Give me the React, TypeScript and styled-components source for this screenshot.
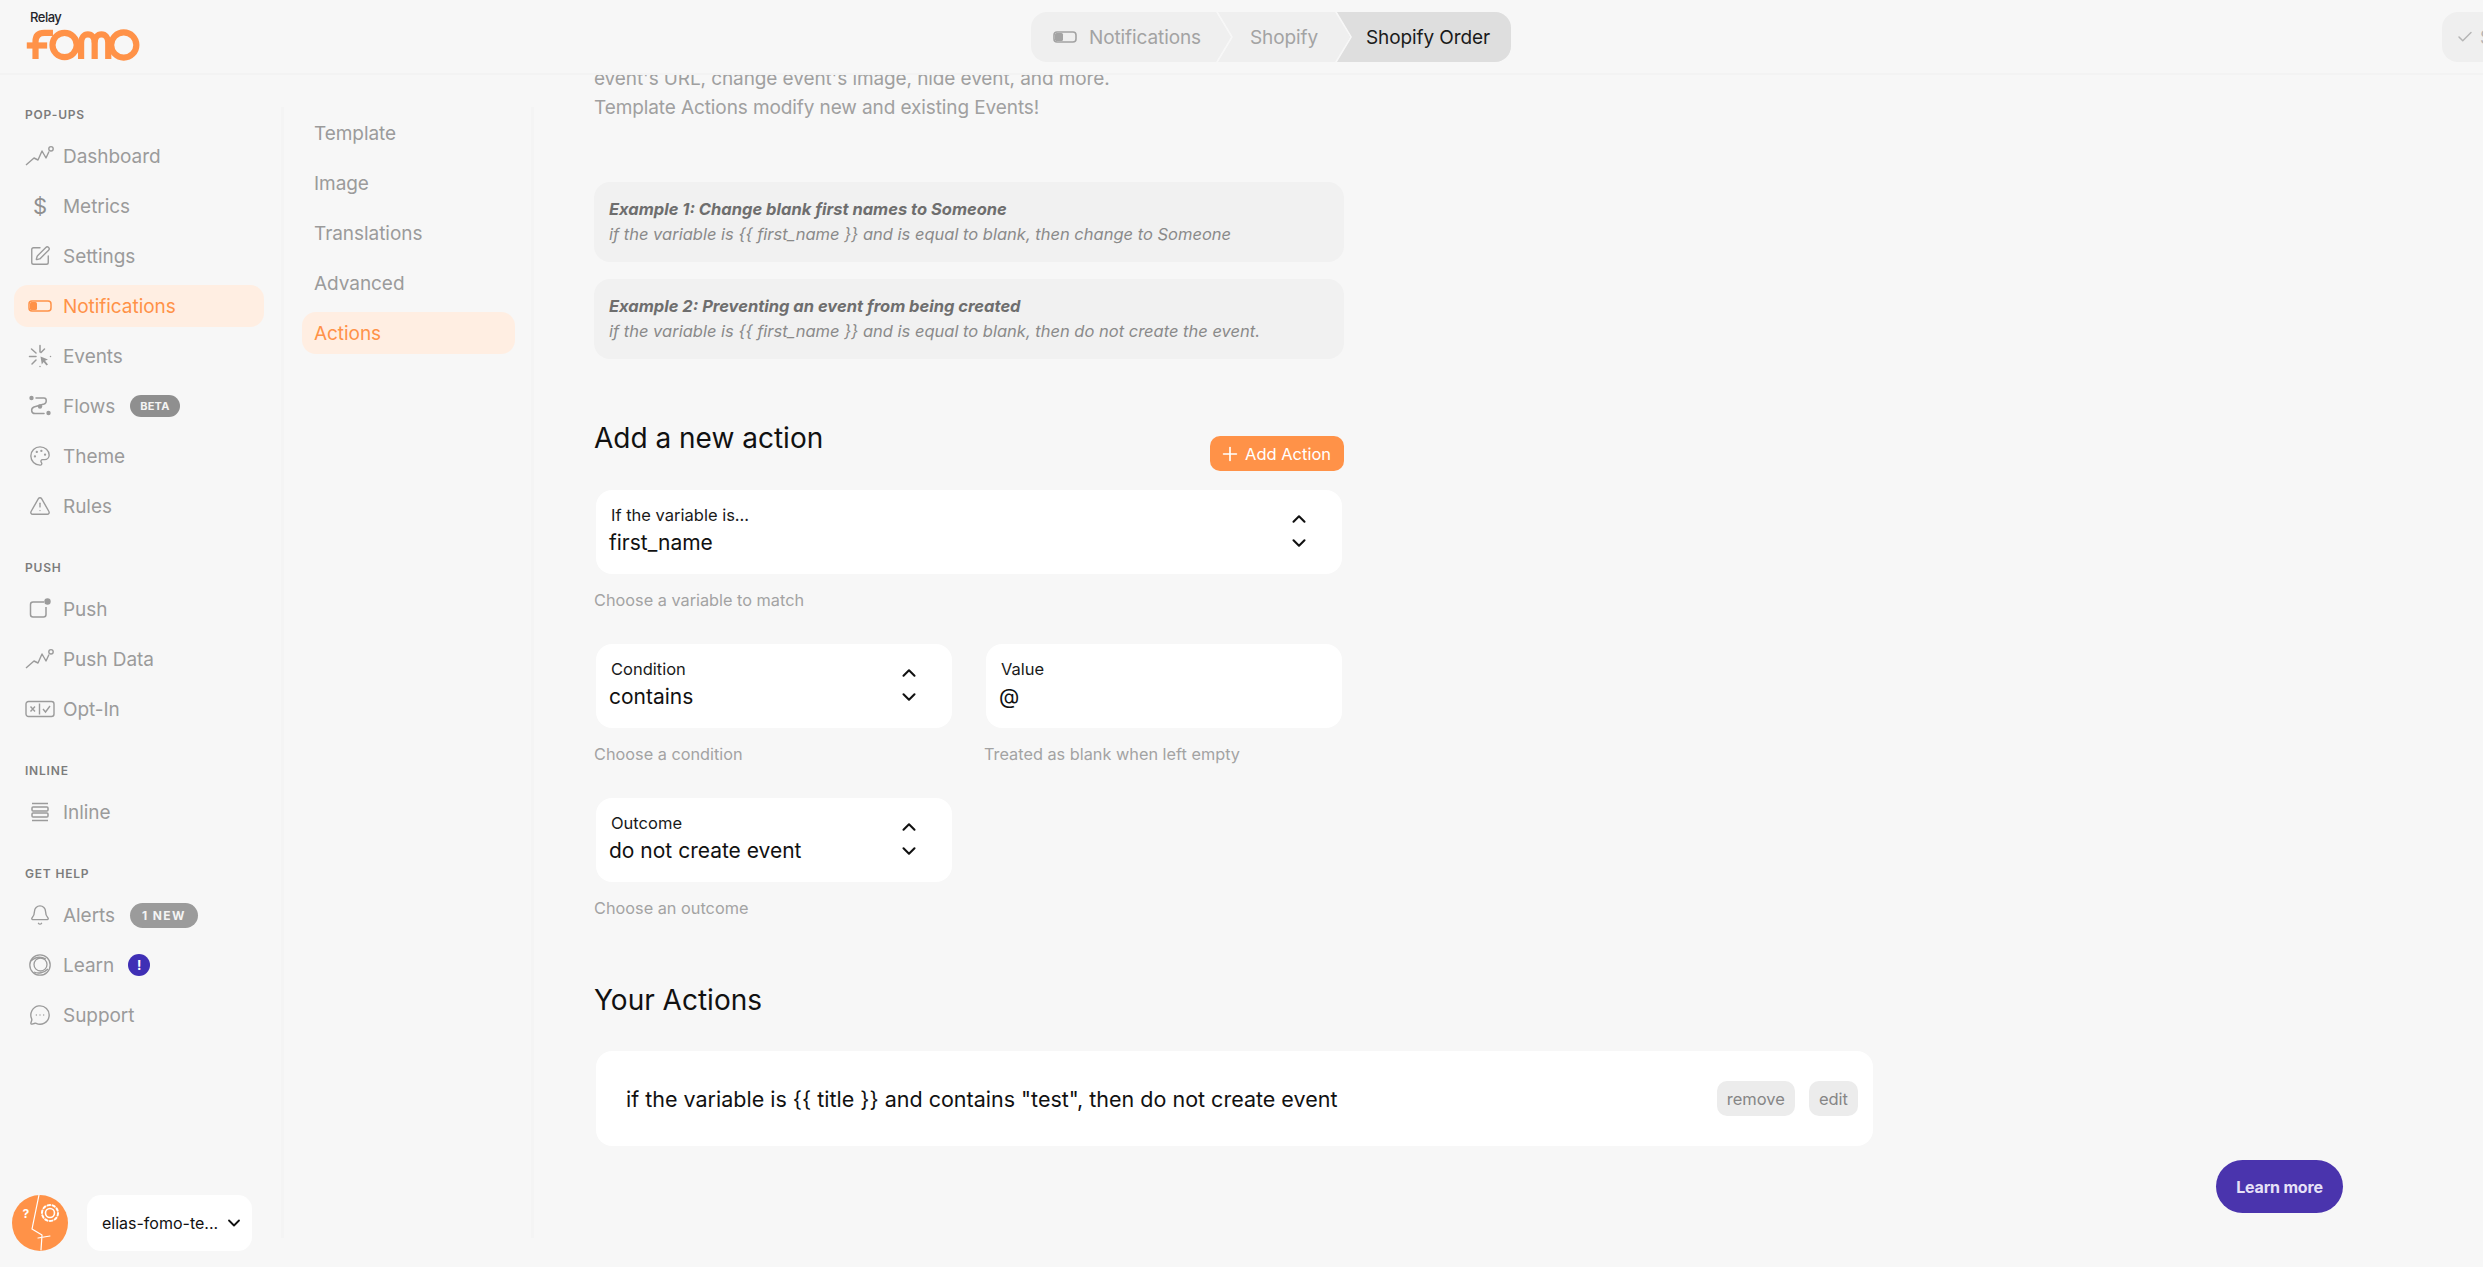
import React from "react";
import styled, { createGlobalStyle } from "styled-components";
import {
  Bell,
  Check,
  ChevronDown,
  ChevronUp,
  MessageCircleMore,
  Palette,
  Plus,
  SquarePen,
  TriangleAlert,
} from "lucide-react";

const FONT = `"Inter", "Noto Sans", sans-serif`;
const ORANGE = "#ff9248";

const GlobalStyle = createGlobalStyle`
  html, body {
    margin: 0;
    height: 100%;
    background: #f7f7f7;
    font-family: ${FONT};
    overflow: hidden;
  }
  * {
    box-sizing: border-box;
  }
`;

const TrendIcon = () => (
  <svg width="30" height="22" viewBox="0 0 30 22" fill="none" stroke="currentColor" strokeWidth="1.4">
    <path d="M1 20 L9 13 L13 15 L17 6 L21 13 L24 6.5" strokeLinejoin="round" />
    <circle cx="26" cy="3.8" r="2.2" />
  </svg>
);

const ToggleIcon = () => (
  <svg width="24" height="14" viewBox="0 0 24 14" fill="none" stroke="currentColor" strokeWidth="1.5">
    <rect x="1" y="2" width="22" height="10" rx="3" />
    <rect x="2" y="3" width="7" height="8" rx="1.5" fill="currentColor" stroke="none" />
  </svg>
);

const EventsIcon = () => (
  <svg width="24" height="24" viewBox="0 0 24 24" fill="none" stroke="currentColor" strokeWidth="1.5" strokeLinecap="round">
    <path d="M12 1.5V8M3.5 5L8 9M1.5 12.5H8M4 20L8 16M16.5 5L13 8.5M12 22.5V22.6M22.5 12.5V12.6" />
    <path d="M12.5 12.5L20 15.5L17 16.8L20 20.5L18.5 21.5L15.6 18L13.8 20.5Z" fill="currentColor" stroke="none" />
  </svg>
);

const FlowsIcon = () => (
  <svg width="24" height="24" viewBox="0 0 24 24" fill="none" stroke="currentColor" strokeWidth="1.5" strokeLinecap="round">
    <circle cx="3.5" cy="4" r="2.2" fill="currentColor" stroke="none" />
    <circle cx="12" cy="12.5" r="2.2" fill="currentColor" stroke="none" />
    <circle cx="20.5" cy="19" r="2.2" fill="currentColor" stroke="none" />
    <path d="M8 4H16C19 4 19 9 16 10L6 13C2.5 14.5 3 19.5 7 19.5H16" />
  </svg>
);

const PushIcon = () => (
  <svg width="24" height="22" viewBox="0 0 24 22" fill="none" stroke="currentColor" strokeWidth="1.5">
    <path d="M16 4H5C3.5 4 2.5 5 2.5 6.5V16.5C2.5 18 3.5 19 5 19H15.5C17 19 18 18 18 16.5V9" />
    <circle cx="19.5" cy="3.5" r="3.2" fill="currentColor" stroke="none" />
  </svg>
);

const OptInIcon = () => (
  <svg width="30" height="18" viewBox="0 0 30 18" fill="none" stroke="currentColor" strokeWidth="1.4">
    <rect x="1" y="1.5" width="28" height="15" rx="2.5" />
    <path d="M5.5 6.5L10 11.5M10 6.5L5.5 11.5M14.5 3.5V14.5M18 9L20.5 12L25 6" />
  </svg>
);

const InlineIcon = () => (
  <svg width="22" height="22" viewBox="0 0 22 22" fill="none" stroke="currentColor" strokeWidth="1.5">
    <path d="M3 2.5H19M3 19.5H19" />
    <rect x="3" y="6" width="16" height="4" rx="1" />
    <rect x="3" y="12" width="16" height="4" rx="1" />
  </svg>
);

const LearnIcon = () => (
  <svg width="24" height="24" viewBox="0 0 24 24" fill="none" stroke="currentColor" strokeWidth="1.3">
    <circle cx="12" cy="12" r="10.2" />
    <circle cx="12.5" cy="11.5" r="6.5" />
    <path d="M3 8C7 4 12 3 18 6M20 16C16 20 10 21 6 19" />
  </svg>
);

const BreadcrumbToggle = () => (
  <svg width="24" height="14" viewBox="0 0 24 14" fill="none" stroke="#a3a3a3" strokeWidth="1.6">
    <rect x="1" y="2" width="22" height="10" rx="3" />
    <rect x="2" y="3" width="8" height="8" rx="1.5" fill="#a3a3a3" stroke="none" />
  </svg>
);

const FomoMark = () => (
  <svg width="120" height="32" viewBox="24 29 120 33" fill="none" stroke={ORANGE} strokeWidth="6.4">
    <path d="M34 60V42C34 36 37 33 43 33H52" />
    <path d="M25 46H46" />
    <circle cx="64" cy="45.5" r="12.5" />
    <path d="M81 60V43C81 38 84 34.5 88 34.5C92 34.5 95 38 95 43V60" />
    <path d="M95 43C95 38 98 34.5 102 34.5C106 34.5 109 38 109 43V60" />
    <circle cx="125" cy="45.5" r="13" />
  </svg>
);

const FaceAvatar = () => (
  <svg width="56" height="56" viewBox="0 0 56 56" fill="none">
    <circle cx="28" cy="28" r="28" fill={ORANGE} />
    <g stroke="#fff" strokeWidth="1.2" strokeLinecap="round" strokeLinejoin="round">
      <path d="M27 0L20 34L30 40L29 55M26 43L38 41" />
      <circle cx="38" cy="18" r="4.5" strokeWidth="1.6" />
      <circle cx="38" cy="18" r="8" strokeWidth="2" strokeDasharray="2.6 2.4" />
    </g>
    <text x="10.5" y="23" fill="#fff" fontSize="12" fontWeight="700" fontFamily={FONT}>
      ?
    </text>
  </svg>
);

const DollarGlyph = styled.span`
  font-size: 22px;
  font-weight: 400;
  color: #8f8f8f;
`;

type NavEntry = {
  label: string;
  icon: React.ReactNode;
  active?: boolean;
  badge?: string;
  alert?: boolean;
};

const ICON = { size: 22, strokeWidth: 1.5 };

const NAV: { title: string; items: NavEntry[] }[] = [
  {
    title: "POP-UPS",
    items: [
      { label: "Dashboard", icon: <TrendIcon /> },
      { label: "Metrics", icon: <DollarGlyph>$</DollarGlyph> },
      { label: "Settings", icon: <SquarePen {...ICON} /> },
      { label: "Notifications", icon: <ToggleIcon />, active: true },
      { label: "Events", icon: <EventsIcon /> },
      { label: "Flows", icon: <FlowsIcon />, badge: "BETA" },
      { label: "Theme", icon: <Palette {...ICON} /> },
      { label: "Rules", icon: <TriangleAlert {...ICON} /> },
    ],
  },
  {
    title: "PUSH",
    items: [
      { label: "Push", icon: <PushIcon /> },
      { label: "Push Data", icon: <TrendIcon /> },
      { label: "Opt-In", icon: <OptInIcon /> },
    ],
  },
  {
    title: "INLINE",
    items: [{ label: "Inline", icon: <InlineIcon /> }],
  },
  {
    title: "GET HELP",
    items: [
      { label: "Alerts", icon: <Bell {...ICON} />, badge: "1 NEW" },
      { label: "Learn", icon: <LearnIcon />, alert: true },
      { label: "Support", icon: <MessageCircleMore {...ICON} /> },
    ],
  },
];

const SUB_NAV = ["Template", "Image", "Translations", "Advanced", "Actions"];

const Page = styled.div`
  position: relative;
  display: grid;
  grid-template-rows: 75px 1fr;
  height: 100vh;
  overflow: hidden;
  background: #f7f7f7;
`;

const Header = styled.header`
  display: flex;
  align-items: center;
  padding-top: 1px;
  border-bottom: 2px solid #f3f3f3;
  overflow: hidden;
  background: #f7f7f7;
  position: relative;
  z-index: 1;
`;

const Logo = styled.div`
  display: flex;
  flex-direction: column;
  align-self: flex-start;
  width: 1031px;
  padding: 8px 0 0 24px;
  flex: none;
`;

const RelayText = styled.span`
  font-size: 13px;
  font-weight: 500;
  line-height: 16px;
  letter-spacing: -0.5px;
  color: #25252b;
  margin-left: 6px;
  margin-bottom: 4px;
`;

const Breadcrumb = styled.nav`
  display: flex;
  height: 50px;
  width: 480px;
  flex: none;
  border-radius: 16px;
  background: #efefef;
  overflow: hidden;
`;

const Crumb = styled.div<{ $current?: boolean; $width: number; $inset: number }>`
  position: relative;
  display: flex;
  align-items: center;
  gap: 12px;
  width: ${(p) => p.$width}px;
  flex: ${(p) => (p.$current ? "1" : "none")};
  padding-left: ${(p) => p.$inset}px;
  font-size: 19px;
  letter-spacing: -0.1px;
  white-space: nowrap;
  color: ${(p) => (p.$current ? "#1a1a1a" : "#a3a3a3")};
  background: ${(p) => (p.$current ? "#dedede" : "transparent")};
  clip-path: ${(p) => (p.$current ? "polygon(0 0, 100% 0, 100% 100%, 0 100%, 14px 50%)" : "none")};

  &::after {
    content: ${(p) => (p.$current ? "none" : '""')};
    position: absolute;
    top: 0;
    right: -16px;
    width: 17px;
    height: 100%;
    z-index: 1;
    background: #f7f7f7;
    clip-path: polygon(0 0, 2px 0, 100% 50%, 2px 100%, 0 100%, calc(100% - 2px) 50%);
  }
`;

const SaveButton = styled.div`
  display: flex;
  align-items: center;
  gap: 6px;
  flex: none;
  height: 50px;
  margin-left: 931px;
  padding-left: 14px;
  width: 120px;
  border-radius: 16px;
  background: #efefef;
  color: #b5b5b5;
  font-size: 18px;
`;

const Body = styled.div`
  display: grid;
  grid-template-columns: 281px 253px 1fr;
  min-height: 0;
`;

const Sidebar = styled.aside`
  display: flex;
  flex-direction: column;
  padding: 30px 0 16px;
  min-height: 0;
`;

const NavSection = styled.section`
  display: flex;
  flex-direction: column;
  gap: 8px;
  padding: 0 17px 0 14px;
  margin-bottom: 31px;
`;

const SectionLabel = styled.h4`
  margin: 0 0 2px 11px;
  height: 20px;
  font-size: 12px;
  line-height: 20px;
  font-weight: 600;
  letter-spacing: 0.8px;
  color: #7c7c7c;
`;

const NavItem = styled.a<{ $active?: boolean }>`
  display: flex;
  align-items: center;
  height: 42px;
  padding-left: 6px;
  border-radius: 14px;
  font-size: 19px;
  letter-spacing: -0.05px;
  color: ${(p) => (p.$active ? ORANGE : "#9b9b9b")};
  background: ${(p) => (p.$active ? "#ffeee2" : "transparent")};
`;

const NavIcon = styled.span`
  display: flex;
  align-items: center;
  justify-content: center;
  width: 40px;
  margin-right: 3px;
  flex: none;
`;

const Badge = styled.span<{ $wide?: boolean }>`
  display: flex;
  align-items: center;
  height: ${(p) => (p.$wide ? 25 : 22)}px;
  padding: 0 ${(p) => (p.$wide ? 12 : 10)}px;
  margin-left: 15px;
  border-radius: 13px;
  background: ${(p) => (p.$wide ? "#9b9b9b" : "#8f8f8f")};
  color: #f4f4f4;
  font-size: ${(p) => (p.$wide ? 12 : 11)}px;
  font-weight: 700;
  letter-spacing: ${(p) => (p.$wide ? 1.4 : 0.2)}px;
`;

const AlertDot = styled.span`
  display: flex;
  align-items: center;
  justify-content: center;
  width: 22px;
  height: 22px;
  margin-left: 14px;
  border-radius: 50%;
  background: #3f2fb5;
  color: #fff;
  font-size: 13px;
  font-weight: 700;
`;

const SidebarFooter = styled.div`
  display: flex;
  align-items: center;
  gap: 19px;
  margin-top: auto;
  padding-left: 12px;
`;

const AccountSelect = styled.div`
  display: flex;
  align-items: center;
  justify-content: space-between;
  width: 165px;
  height: 56px;
  padding: 0 8px 0 15px;
  border-radius: 14px;
  background: #fff;
  font-size: 16px;
  color: #111;
  white-space: nowrap;
`;

const SubNav = styled.nav`
  display: flex;
  flex-direction: column;
  gap: 8px;
  margin: 32px 0 29px;
  padding: 5px 16px 0 18px;
  border-left: 3px solid #f4f4f4;
  border-right: 3px solid #f4f4f4;
`;

const SubNavItem = styled.a<{ $active?: boolean }>`
  display: flex;
  align-items: center;
  height: 42px;
  padding-left: 12px;
  border-radius: 14px;
  font-size: 19px;
  letter-spacing: -0.05px;
  color: ${(p) => (p.$active ? ORANGE : "#9b9b9b")};
  background: ${(p) => (p.$active ? "#ffeee2" : "transparent")};
`;

const Main = styled.main`
  padding-left: 60px;
  overflow: hidden;
  min-height: 0;
`;

const Content = styled.div`
  width: 1279px;
`;

const Intro = styled.p`
  width: 750px;
  margin: -11px 0 0;
  font-size: 19px;
  line-height: 29px;
  letter-spacing: -0.1px;
  color: #a0a0a0;
`;

const Examples = styled.div`
  display: flex;
  flex-direction: column;
  gap: 17px;
  width: 750px;
  margin-top: 60px;
`;

const ExampleBox = styled.div`
  height: 80px;
  padding: 15px 15px 0;
  border-radius: 16px;
  background: #f1f1f1;
  font-size: 16.5px;
  line-height: 25px;
  font-style: italic;
  color: #8a8a8a;
`;

const ExampleTitle = styled.div`
  font-weight: 700;
  color: #6e6e6e;
`;

const ExampleText = styled.div``;

const AddRow = styled.div`
  display: flex;
  justify-content: space-between;
  align-items: flex-end;
  width: 750px;
  margin-top: 61px;
`;

const SectionTitle = styled.h2`
  margin: 0;
  font-size: 28px;
  line-height: 36px;
  font-weight: 400;
  color: #111;
`;

const AddTitle = styled(SectionTitle)`
  padding-bottom: 15px;
`;

const AddButton = styled.button`
  display: flex;
  align-items: center;
  gap: 4px;
  height: 35px;
  width: 134px;
  padding: 0 0 0 9px;
  border: 0;
  border-radius: 10px;
  background: ${ORANGE};
  color: #fff;
  font-family: ${FONT};
  font-size: 16.5px;
`;

const FieldGrid = styled.div`
  display: grid;
  grid-template-columns: 360px 360px;
  column-gap: 30px;
  row-gap: 33px;
  width: 750px;
  margin-top: 19px;
`;

const Field = styled.div<{ $wide?: boolean }>`
  grid-column: ${(p) => (p.$wide ? "1 / -1" : "auto")};
`;

const FieldCard = styled.div`
  display: flex;
  justify-content: space-between;
  height: 84px;
  margin: 0 2px;
  padding: 15px 32px 0 15px;
  border-radius: 16px;
  background: #fff;
`;

const FieldText = styled.div`
  display: flex;
  flex-direction: column;
`;

const FieldLabel = styled.label`
  font-size: 16.5px;
  line-height: 20px;
  color: #1a1a1a;
`;

const FieldValue = styled.div`
  margin: 5px 0 0 -2px;
  font-size: 21px;
  line-height: 26px;
  color: #111;
`;

const Chevrons = styled.div`
  display: flex;
  flex-direction: column;
  gap: 2px;
  padding-top: 3px;
  color: #111;
`;

const Hint = styled.div`
  margin-top: 15px;
  font-size: 16.3px;
  line-height: 22px;
  color: #a3a3a3;
`;

const ActionsTitle = styled(SectionTitle)`
  margin-top: 63px;
`;

const ActionRow = styled.div`
  display: flex;
  align-items: center;
  justify-content: space-between;
  height: 95px;
  margin: 33px 0 0 2px;
  padding: 0 15px 0 30px;
  border-radius: 16px;
  background: #fff;
  font-size: 21.5px;
  color: #111;
`;

const ActionButtons = styled.div`
  display: flex;
  gap: 14px;
`;

const SmallButton = styled.button`
  height: 35px;
  padding: 0 10px;
  border: 0;
  border-radius: 10px;
  background: #ececec;
  color: #868686;
  font-family: ${FONT};
  font-size: 16.5px;
`;

const LearnMore = styled.button`
  position: absolute;
  right: 140px;
  bottom: 54px;
  width: 127px;
  height: 53px;
  border: 0;
  border-radius: 27px;
  background: #4a34ad;
  color: #e6e1f7;
  font-family: ${FONT};
  font-size: 16px;
  font-weight: 700;
  letter-spacing: -0.2px;
`;

const SelectField = ({ label, value, hint, wide }: { label: string; value: string; hint: string; wide?: boolean }) => (
  <Field $wide={wide}>
    <FieldCard>
      <FieldText>
        <FieldLabel>{label}</FieldLabel>
        <FieldValue>{value}</FieldValue>
      </FieldText>
      <Chevrons>
        <ChevronUp size={22} strokeWidth={2.3} />
        <ChevronDown size={22} strokeWidth={2.3} />
      </Chevrons>
    </FieldCard>
    <Hint>{hint}</Hint>
  </Field>
);

export default function App() {
  return (
    <Page>
      <GlobalStyle />
      <Header>
        <Logo>
          <RelayText>Relay</RelayText>
          <FomoMark />
        </Logo>
        <Breadcrumb>
          <Crumb $width={186} $inset={22}>
            <BreadcrumbToggle />
            Notifications
          </Crumb>
          <Crumb $width={119} $inset={33}>
            Shopify
          </Crumb>
          <Crumb $current $width={175} $inset={30}>
            Shopify Order
          </Crumb>
        </Breadcrumb>
        <SaveButton>
          <Check size={18} strokeWidth={2} />
          Save
        </SaveButton>
      </Header>
      <Body>
        <Sidebar>
          {NAV.map((section) => (
            <NavSection key={section.title}>
              <SectionLabel>{section.title}</SectionLabel>
              {section.items.map((item) => (
                <NavItem key={item.label} $active={item.active}>
                  <NavIcon>{item.icon}</NavIcon>
                  {item.label}
                  {item.badge && <Badge $wide={item.badge !== "BETA"}>{item.badge}</Badge>}
                  {item.alert && <AlertDot>!</AlertDot>}
                </NavItem>
              ))}
            </NavSection>
          ))}
          <SidebarFooter>
            <FaceAvatar />
            <AccountSelect>
              elias-fomo-te...
              <ChevronDown size={20} strokeWidth={2.2} />
            </AccountSelect>
          </SidebarFooter>
        </Sidebar>
        <SubNav>
          {SUB_NAV.map((item) => (
            <SubNavItem key={item} $active={item === "Actions"}>
              {item}
            </SubNavItem>
          ))}
        </SubNav>
        <Main>
          <Content>
            <Intro>
              event's URL, change event's image, hide event, and more.
              <br />
              Template Actions modify new and existing Events!
            </Intro>
            <Examples>
              <ExampleBox>
                <ExampleTitle>Example 1: Change blank first names to Someone</ExampleTitle>
                <ExampleText>if the variable is {"{{ first_name }}"} and is equal to blank, then change to Someone</ExampleText>
              </ExampleBox>
              <ExampleBox>
                <ExampleTitle>Example 2: Preventing an event from being created</ExampleTitle>
                <ExampleText>if the variable is {"{{ first_name }}"} and is equal to blank, then do not create the event.</ExampleText>
              </ExampleBox>
            </Examples>
            <AddRow>
              <AddTitle>Add a new action</AddTitle>
              <AddButton>
                <Plus size={22} strokeWidth={1.8} />
                Add Action
              </AddButton>
            </AddRow>
            <FieldGrid>
              <SelectField wide label="If the variable is..." value="first_name" hint="Choose a variable to match" />
              <SelectField label="Condition" value="contains" hint="Choose a condition" />
              <Field>
                <FieldCard>
                  <FieldText>
                    <FieldLabel>Value</FieldLabel>
                    <FieldValue>@</FieldValue>
                  </FieldText>
                </FieldCard>
                <Hint>Treated as blank when left empty</Hint>
              </Field>
              <SelectField label="Outcome" value="do not create event" hint="Choose an outcome" />
            </FieldGrid>
            <ActionsTitle>Your Actions</ActionsTitle>
            <ActionRow>
              if the variable is {"{{ title }}"} and contains "test", then do not create event
              <ActionButtons>
                <SmallButton>remove</SmallButton>
                <SmallButton>edit</SmallButton>
              </ActionButtons>
            </ActionRow>
          </Content>
        </Main>
      </Body>
      <LearnMore>Learn more</LearnMore>
    </Page>
  );
}
